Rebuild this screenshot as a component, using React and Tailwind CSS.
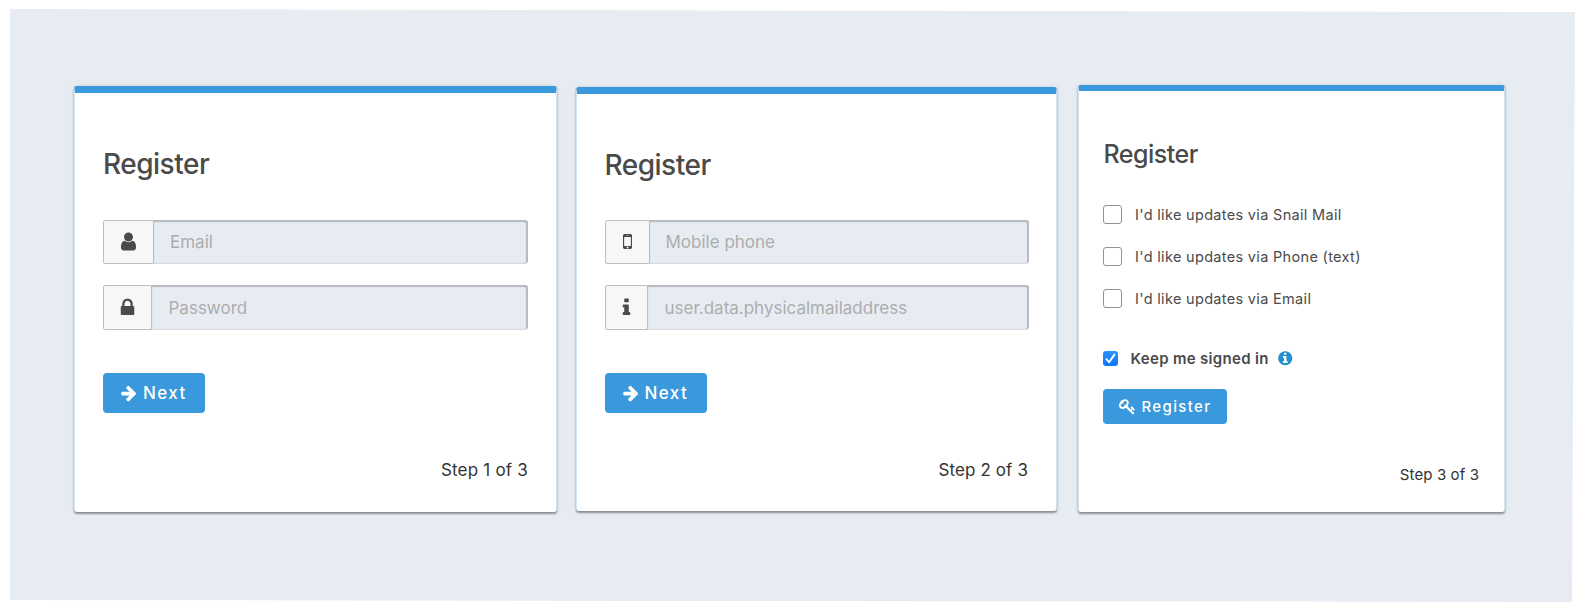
const PATHS = {
  user: "M1536 1399q0 109-62.5 187t-150.5 78h-854q-88 0-150.5-78t-62.5-187q0-85 8.5-160.5t31.5-152 58.5-131 94-89 134.5-34.5q131 128 313 128t313-128q76 0 134.5 34.5t94 89 58.5 131 31.5 152 8.5 160.5zm-256-887q0 159-112.5 271.5t-271.5 112.5-271.5-112.5-112.5-271.5 112.5-271.5 271.5-112.5 271.5 112.5 112.5 271.5z",
  lock: "M640 768h512v-192q0-106-75-181t-181-75-181 75-75 181v192zm832 96v576q0 40-28 68t-68 28h-960q-40 0-68-28t-28-68v-576q0-40 28-68t68-28h32v-192q0-184 132-316t316-132 316 132 132 316v192h32q40 0 68 28t28 68z",
  mobile: "M976 1408q0-33-23.5-56.5t-56.5-23.5-56.5 23.5-23.5 56.5 23.5 56.5 56.5 23.5 56.5-23.5 23.5-56.5zm208-160v-704q0-13-9.5-22.5t-22.5-9.5h-512q-13 0-22.5 9.5t-9.5 22.5v704q0 13 9.5 22.5t22.5 9.5h512q13 0 22.5-9.5t9.5-22.5zm-192-848q0-16-16-16h-160q-16 0-16 16t16 16h160q16 0 16-16zm288-16v1024q0 52-38 90t-90 38h-512q-52 0-90-38t-38-90v-1024q0-52 38-90t90-38h512q52 0 90 38t38 90z",
  info: "M1216 1344v128q0 26-19 45t-45 19h-512q-26 0-45-19t-19-45v-128q0-26 19-45t45-19h64v-384h-64q-26 0-45-19t-19-45v-128q0-26 19-45t45-19h384q26 0 45 19t19 45v576h64q26 0 45 19t19 45zm-128-1152v192q0 26-19 45t-45 19h-256q-26 0-45-19t-19-45v-192q0-26 19-45t45-19h256q26 0 45 19t19 45z",
  arrow: "M1600 960q0 54-37 91l-651 651q-39 37-91 37-51 0-90-37l-75-75q-38-38-38-91t38-91l293-293h-704q-52 0-84.5-37.5t-32.5-90.5v-128q0-53 32.5-90.5t84.5-37.5h704l-293-294q-38-36-38-90t38-90l75-75q38-38 90-38 53 0 91 38l651 651q37 35 37 90z",
  infoCircle: "M1152 1376v-160q0-14-9-23t-23-9h-96v-512q0-14-9-23t-23-9h-320q-14 0-23 9t-9 23v160q0 14 9 23t23 9h96v320h-96q-14 0-23 9t-9 23v160q0 14 9 23t23 9h448q14 0 23-9t9-23zm-128-896v-160q0-14-9-23t-23-9h-192q-14 0-23 9t-9 23v160q0 14 9 23t23 9h192q14 0 23-9t9-23zm640 416q0 209-103 385.5t-279.5 279.5-385.5 103-385.5-103-279.5-279.5-103-385.5 103-385.5 279.5-279.5 385.5-103 385.5 103 279.5 279.5 103 385.5z",
  key: "M832 512q0-80-56-136t-136-56-136 56-56 136q0 42 19 83-41-19-83-19-80 0-136 56t-56 136 56 136 136 56 136-56 56-136q0-42-19-83 41 19 83 19 80 0 136-56t56-136zm851 704q0 17-49 66t-66 49q-9 0-28.5-16t-36.5-33-38.5-40-24.5-26l-96 96 220 220q28 28 28 68 0 42-39 81t-81 39q-40 0-68-28l-671-671q-176 131-365 131-163 0-265.5-102.5t-102.5-265.5q0-160 95-313t248-248 313-95q163 0 265.5 102.5t102.5 265.5q0 189-131 365l355 355 96-96q-3-3-26-24.5t-40-38.5-33-36.5-16-28.5q0-17 49-66t66-49q13 0 23 10 6 6 46 44.5t82 79.5 86.5 86 73 78 28.5 41z",
};

function Icon({ name, className }) {
  return (
    <svg viewBox="0 0 1792 1792" fill="currentColor" className={`shrink-0 ${className}`} aria-hidden="true">
      <path d={PATHS[name]} />
    </svg>
  );
}

function Card({ className, children }) {
  return (
    <section
      className={`flex shrink-0 flex-col rounded-[3px] border-x border-x-[#cfe3f3] border-t-[#3a98dc] bg-white shadow-[0_1.5px_2px_rgba(0,0,0,0.38),0_0_4px_rgba(0,0,0,0.08)] ${className}`}
    >
      {children}
    </section>
  );
}

function Field({ icon, placeholder, addon, className = "", text = "" }) {
  return (
    <div className={`flex h-[44.5px] ${className}`}>
      <span className={`flex shrink-0 items-center justify-center rounded-l-[2px] border border-[#bcbebf] bg-[#f7f7f7] text-[#4a4a4a] ${addon}`}>
        <Icon name={icon} className="size-[21px]" />
      </span>
      <input
        className={`min-w-0 flex-1 rounded-r-[3px] border-b border-[#d9dce0] bg-[#e7ecf3] pt-[3px] text-[17px] text-[#4a4a4a] shadow-[inset_-1px_1px_1px_1px_#b6babe] outline-none placeholder:text-[#adadad] placeholder:opacity-100 ${text}`}
        placeholder={placeholder}
      />
    </div>
  );
}

function NextButton({ className }) {
  return (
    <button className={`flex h-10 w-[102px] items-center rounded-[4px] bg-[#3a98dc] pl-[17px] text-[17px] font-[450] tracking-[1.4px] text-white ${className}`}>
      <Icon name="arrow" className="mr-[5px] size-[18px]" />
      <span className="pt-[2px]">Next</span>
    </button>
  );
}

function Option({ label }) {
  return (
    <label className="flex h-[19px] items-center text-[14.5px] leading-[19px] tracking-[0.32px] text-[#4a4a4a]">
      <span className="mr-[13px] size-[19px] rounded-[3px] border border-[#929292] bg-white" />
      {label}
    </label>
  );
}

export default function App() {
  return (
    <div className="h-[610px] w-[1583px] overflow-hidden bg-white font-['Inter',sans-serif]">
      <main className="flex h-full items-start bg-[#e7ecf3] pl-[74px] [clip-path:polygon(10px_9px,1575px_12px,1572px_602px,10px_600px)]">
        <Card className="mt-[86px] h-[426px] w-[483px] border-t-[7px] px-7">
          <h2 className="mt-[54px] text-[28px] leading-[34px] font-[450] tracking-[-0.5px] text-[#4a4a4a]">Register</h2>
          <Field icon="user" placeholder="Email" addon="w-[51px]" text="pl-4" className="mt-[38.5px]" />
          <Field icon="lock" placeholder="Password" addon="w-[49px]" text="pl-[16.5px]" className="mt-[21px]" />
          <NextButton className="mt-[43.5px]" />
          <p className="mt-[46.5px] self-end text-[17px] leading-5 tracking-[0.2px] text-[#333]">Step 1 of 3</p>
        </Card>

        <Card className="mt-[87px] ml-[19px] h-[424px] w-[481px] border-t-[7px] px-[27.5px]">
          <h2 className="mt-[54px] text-[28px] leading-[34px] font-[450] tracking-[-0.5px] text-[#4a4a4a]">Register</h2>
          <Field icon="mobile" placeholder="Mobile phone" addon="w-[45px]" text="pl-4" className="mt-[37.5px]" />
          <Field icon="info" placeholder="user.data.physicalmailaddress" addon="w-[43.5px]" text="pl-[16.5px]" className="mt-[21px]" />
          <NextButton className="mt-[43.5px]" />
          <p className="mt-[46.5px] self-end pr-[0.5px] text-[17px] leading-5 tracking-[0.1px] text-[#333]">Step 2 of 3</p>
        </Card>

        <Card className="mt-[85px] ml-[21px] h-[426.5px] w-[427px] border-t-[6.5px] px-6">
          <h2 className="mt-[48px] pl-[0.5px] text-[25px] leading-[30px] font-[450] tracking-[-0.5px] text-[#4a4a4a]">Register</h2>
          <div className="mt-9 flex flex-col gap-[23px]">
            <Option label="I'd like updates via Snail Mail" />
            <Option label="I'd like updates via Phone (text)" />
            <Option label="I'd like updates via Email" />
          </div>
          <label className="mt-[43px] flex h-[15px] items-center text-[15px] leading-[15px] font-semibold tracking-[0.32px] text-[#4a4a4a]">
            <span className="mr-[12.5px] flex size-[15px] items-center justify-center rounded-[3px] bg-linear-to-b from-[#2b91ff] to-[#0a78fb] text-white">
              <svg viewBox="0 0 15 15" className="size-[15px]" fill="none" stroke="currentColor" strokeWidth="1.9" strokeLinecap="round" strokeLinejoin="round">
                <path d="M3.4 8.2 6.1 11.2 11.4 3.6" />
              </svg>
            </span>
            Keep me signed in
            <Icon name="infoCircle" className="mb-px ml-[8px] size-[16.5px] text-[#2390d0]" />
          </label>
          <button className="mt-[23px] flex h-[35px] w-[124px] items-center rounded-[4px] bg-[#3a98dc] pt-px pl-4 text-[15px] font-[450] tracking-[1.35px] text-white">
            <Icon name="key" className="mb-px mr-[5.5px] size-[17px]" />
            Register
          </button>
          <p className="mt-[41px] self-end pr-px text-[15px] leading-5 tracking-[0.1px] text-[#333]">Step 3 of 3</p>
        </Card>
      </main>
    </div>
  );
}
